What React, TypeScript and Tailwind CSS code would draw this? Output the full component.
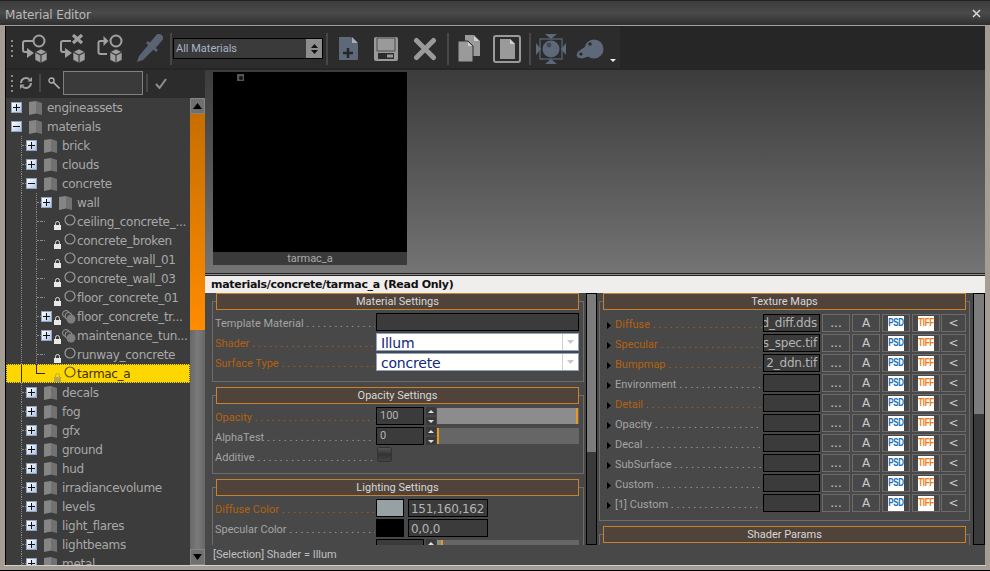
import { ReactNode } from "react";

const UI_FONT = "font-['DejaVu_Sans',sans-serif]";
const LABEL_FONT = "font-['Roboto',sans-serif]";

type TreeRow = {
  label: string;
  depth: number;
  kind: "folder" | "leaf" | "multi";
  open?: boolean;
  selected?: boolean;
};

const treeRows: TreeRow[] = [
  { label: "engineassets", depth: 0, kind: "folder" },
  { label: "materials", depth: 0, kind: "folder", open: true },
  { label: "brick", depth: 1, kind: "folder" },
  { label: "clouds", depth: 1, kind: "folder" },
  { label: "concrete", depth: 1, kind: "folder", open: true },
  { label: "wall", depth: 2, kind: "folder" },
  { label: "ceiling_concrete_...", depth: 2, kind: "leaf" },
  { label: "concrete_broken", depth: 2, kind: "leaf" },
  { label: "concrete_wall_01", depth: 2, kind: "leaf" },
  { label: "concrete_wall_03", depth: 2, kind: "leaf" },
  { label: "floor_concrete_01", depth: 2, kind: "leaf" },
  { label: "floor_concrete_tr...", depth: 2, kind: "multi" },
  { label: "maintenance_tun...", depth: 2, kind: "multi" },
  { label: "runway_concrete", depth: 2, kind: "leaf" },
  { label: "tarmac_a", depth: 2, kind: "leaf", selected: true },
  { label: "decals", depth: 1, kind: "folder" },
  { label: "fog", depth: 1, kind: "folder" },
  { label: "gfx", depth: 1, kind: "folder" },
  { label: "ground", depth: 1, kind: "folder" },
  { label: "hud", depth: 1, kind: "folder" },
  { label: "irradiancevolume", depth: 1, kind: "folder" },
  { label: "levels", depth: 1, kind: "folder" },
  { label: "light_flares", depth: 1, kind: "folder" },
  { label: "lightbeams", depth: 1, kind: "folder" },
  { label: "metal", depth: 1, kind: "folder" },
];

const textureRows = [
  { label: "Diffuse", value: "d_diff.dds", active: true },
  { label: "Specular", value: "s_spec.tif", active: true },
  { label: "Bumpmap", value: "2_ddn.tif", active: true },
  { label: "Environment", value: "" },
  { label: "Detail", value: "", active: true },
  { label: "Opacity", value: "" },
  { label: "Decal", value: "" },
  { label: "SubSurface", value: "" },
  { label: "Custom", value: "" },
  { label: "[1] Custom", value: "" },
];

const DOTS = " . . . . . . . . . . . . . . . . . . . . . . . . . .";

function Sep({ className = "" }: { className?: string }) {
  return <div className={`w-[2px] h-[32px] bg-[#474747] shrink-0 ${className}`} />;
}

function Grip() {
  return (
    <div className="flex flex-col gap-[3px] shrink-0">
      {[0, 1, 2, 3].map((i) => (
        <span key={i} className="block w-[2px] h-[2px] bg-[#8a8a8a]" />
      ))}
    </div>
  );
}

function Cube({ x, y }: { x: number; y: number }) {
  return (
    <g transform={`translate(${x} ${y})`}>
      <path d="M6 0 12 3 12 11 6 14 0 11 0 3Z" fill="#a0a0a0" stroke="#2c2c2c" strokeWidth="0.6" />
      <path d="M0 3 6 6 12 3M6 6V14" fill="none" stroke="#3a3a3a" strokeWidth="1.2" />
    </g>
  );
}

function FlowIcon({ variant }: { variant: "add" | "remove" | "assign" }) {
  return (
    <svg width="27" height="30" viewBox="0 0 27 30" className="shrink-0">
      {variant === "remove" ? (
        <path d="M13 1 22 9M22 1 13 9" stroke="#a0a0a0" strokeWidth="3.2" />
      ) : (
        <circle cx={variant === "assign" ? 19 : 17} cy="7" r="5.5" fill="none" stroke="#a0a0a0" strokeWidth="2" />
      )}
      {variant === "assign" ? (
        <>
          <path d="M8 7H3.500Q1.500 7 1.500 9V18Q1.500 20 3.500 20H10" fill="none" stroke="#a0a0a0" strokeWidth="2" />
          <path d="M6.500 2 11.500 7 6.500 12Z" fill="#a0a0a0" />
        </>
      ) : (
        <path d="M11 7H3Q1 7 1 9V16Q1 18 3 18H6" fill="none" stroke="#a0a0a0" strokeWidth="2" />
      )}
      {variant !== "assign" && <path d="M5 14 12 19 5 24Z" fill="#a0a0a0" />}
      <Cube x={13} y={15} />
    </svg>
  );
}

function Dropper() {
  return (
    <svg width="27" height="29" viewBox="0 0 27 29" className="shrink-0">
      <path d="M1 28 3 22 14 9 19 14 7 26Z" fill="#5a6373" />
      <path d="M11 8 21 17" stroke="#5a6373" strokeWidth="3" />
      <path d="M17 11 23 4" stroke="#5a6373" strokeWidth="8" strokeLinecap="round" />
    </svg>
  );
}

function SmallX({ size = 24 }: { size?: number }) {
  return (
    <svg width={size} height={size} viewBox="0 0 24 24" className="shrink-0">
      <path d="M3.500 3.500 20.500 20.500M20.500 3.500 3.500 20.500" stroke="#9a9a9a" strokeWidth="5" strokeLinecap="round" />
    </svg>
  );
}

function NewDoc() {
  return (
    <svg width="19" height="25" viewBox="0 0 19 25" className="shrink-0">
      <path d="M0 1H12L19 8V23Q19 24 18 24H1Q0 24 0 23Z" fill="#5d6879" />
      <path d="M13 1 19 7H13Z" fill="#a8adb5" />
      <path d="M9 12V22M4 17H14" stroke="#262626" strokeWidth="2.400" />
    </svg>
  );
}

function SaveIcon() {
  return (
    <svg width="24" height="24" viewBox="0 0 24 24" className="shrink-0">
      <path d="M2 0H22Q24 0 24 2V22Q24 24 22 24H2Q0 24 0 22V2Q0 0 2 0Z" fill="#9a9a9a" />
      <rect x="3" y="1" width="18" height="13" fill="#9a9a9a" stroke="#3a3a3a" strokeWidth="0.8" />
      <rect x="4" y="16" width="16" height="6" fill="#2c2c2c" />
      <rect x="13" y="17.500" width="6" height="3" fill="#9a9a9a" />
    </svg>
  );
}

function CopyDocs() {
  return (
    <svg width="22" height="28" viewBox="0 0 22 28" className="shrink-0">
      <path d="M7 0H16L22 6V21H7Z" fill="#9a9a9a" />
      <path d="M16 1 21 6H16Z" fill="#d0d0d0" />
      <path d="M0 6H10L15 11V27H0Z" fill="#9a9a9a" stroke="#2c2c2c" strokeWidth="1" />
      <path d="M10 7 14 11H10Z" fill="#d0d0d0" />
    </svg>
  );
}

function PageBox() {
  return (
    <div className="w-[28px] h-[28px] shrink-0 rounded-[3px] border-2 border-[#9a9a9a] flex items-center justify-center">
      <svg width="15" height="20" viewBox="0 0 15 20">
        <path d="M0 0H10L15 5V20H0Z" fill="#9a9a9a" />
        <path d="M10 0 15 5H10Z" fill="#d0d0d0" />
      </svg>
    </div>
  );
}

function SphereTargets() {
  return (
    <svg width="30" height="30" viewBox="0 0 30 30" className="shrink-0">
      <rect x="4" y="5" width="22" height="20" fill="none" stroke="#5d6879" strokeWidth="1.200" />
      <circle cx="15" cy="15" r="8.500" fill="#5d6879" />
      <path d="M9 0H21L15 5ZM9 30H21L15 25ZM0 9V21L5 15ZM30 9V21L25 15Z" fill="#5d6879" />
      <circle cx="13" cy="11" r="2.400" fill="#2c2c2c" opacity="0.5" />
    </svg>
  );
}

function SpherePill() {
  return (
    <svg width="29" height="20" viewBox="0 0 29 20" className="shrink-0">
      <path d="M2 13 16 3 20 16 7 20Q3 20 1 17Z" fill="#5d6879" stroke="#262626" strokeWidth="0.8" />
      <circle cx="19" cy="10" r="9.500" fill="#5d6879" />
      <circle cx="15" cy="5" r="1.800" fill="#2c2c2c" />
      <circle cx="6" cy="15" r="1.600" fill="#262626" />
    </svg>
  );
}

function RefreshIcon() {
  return (
    <svg width="14" height="14" viewBox="0 0 14 14" className="shrink-0">
      <path d="M2 7A5 5 0 0 1 10.500 3.500" fill="none" stroke="#a0a0a0" strokeWidth="2" />
      <path d="M12 7A5 5 0 0 1 3.500 10.500" fill="none" stroke="#a0a0a0" strokeWidth="2" />
      <path d="M8.500 5.500H13V1ZM5.500 8.500H1V13Z" fill="#a0a0a0" />
    </svg>
  );
}

function SearchIcon() {
  return (
    <svg width="12" height="12" viewBox="0 0 12 12" className="shrink-0">
      <circle cx="3.500" cy="3.500" r="2.500" fill="none" stroke="#b0b0b0" strokeWidth="1.400" />
      <path d="M5.500 5.500 11.500 11.500" stroke="#b0b0b0" strokeWidth="1.600" />
    </svg>
  );
}

function CheckIcon() {
  return (
    <svg width="12" height="11" viewBox="0 0 12 11" className="shrink-0">
      <path d="M1 6 4.500 10 11 1" fill="none" stroke="#8f8f8f" strokeWidth="2" />
    </svg>
  );
}

function ScrollArrow({ up }: { up?: boolean }) {
  return (
    <div className="h-[16px] shrink-0 bg-[#707070] border border-[#858585] flex items-center justify-center">
      <svg width="9" height="6" viewBox="0 0 9 6">
        <path d={up ? "M0 6H9L4.500 0Z" : "M0 0H9L4.500 6Z"} fill="#000" />
      </svg>
    </div>
  );
}

function Expander({ open }: { open?: boolean }) {
  return (
    <span className="flex w-[11px] h-[11px] shrink-0 items-center justify-center border border-[#8fa4c4] bg-gradient-to-br from-white to-[#b4c6e2]">
      <svg width="7" height="7" viewBox="0 0 7 7">
        <path d={open ? "M0 3.500H7" : "M0 3.500H7M3.500 0V7"} stroke="#111" strokeWidth="1" />
      </svg>
    </span>
  );
}

function FolderIcon() {
  return (
    <svg width="14" height="14" viewBox="0 0 14 14" className="shrink-0">
      <path d="M0 1 7 0V12.500L0 14Z" fill="#858585" />
      <path d="M7 0 13 2V14L7 12.500Z" fill="#717171" />
    </svg>
  );
}

function LockIcon({ dim }: { dim?: boolean }) {
  return (
    <svg width="7" height="9" viewBox="0 0 7 9" className="shrink-0 mt-[7px]">
      <path d="M1.500 4V2.500A2 2 0 0 1 5.500 2.500V4" fill="none" stroke={dim ? "#b8a84a" : "#d8d8d8"} strokeWidth="1" />
      <rect x="0" y="4" width="7" height="5" fill={dim ? "#b8a84a" : "#e8e8e8"} />
    </svg>
  );
}

function RingIcon({ dark }: { dark?: boolean }) {
  return (
    <svg width="12" height="12" viewBox="0 0 12 12" className="shrink-0">
      <circle cx="6" cy="6" r="5" fill="none" stroke={dark ? "#5c5230" : "#9a9a9a"} strokeWidth="1.200" />
    </svg>
  );
}

function MultiRing() {
  return (
    <svg width="14" height="14" viewBox="0 0 14 14" className="shrink-0">
      <circle cx="4" cy="4" r="3.500" fill="none" stroke="#9a9a9a" />
      <circle cx="6.500" cy="6" r="3.500" fill="#3c3c3c" stroke="#9a9a9a" />
      <circle cx="9" cy="9" r="4.500" fill="#7d7d7d" />
    </svg>
  );
}

function Guide({ connector, corner, solid }: { connector?: boolean; corner?: boolean; solid?: boolean }) {
  const line = solid ? "border-solid border-[#2b2b2b]" : "border-dotted border-[#8a8a8a]";
  return (
    <span className="flex h-full w-[15px] shrink-0 pl-[10px]">
      {corner ? (
        <span className={`h-[10px] w-[5px] border-b border-l ${line}`} />
      ) : (
        <span className={`flex h-full w-[5px] items-center border-l ${line}`}>
          {connector && <span className={`block h-0 w-full border-t ${line}`} />}
        </span>
      )}
    </span>
  );
}

function TreeItem({ row }: { row: TreeRow }) {
  const isLeafRow = row.kind !== "folder";
  const guides = [];
  for (let i = 0; i < row.depth; i++) {
    const last = i === row.depth - 1;
    guides.push(<Guide key={i} connector={last} corner={last && row.selected} solid={row.selected} />);
  }
  return (
    <div
      className={`flex h-[19px] shrink-0 items-center pl-[5px] text-[12px] tracking-[-0.3px] whitespace-nowrap ${
        row.selected ? "bg-[#ffd700] text-[#3a3000] outline outline-1 -outline-offset-1 outline-dotted outline-[#555]" : "text-[#a8a8a8]"
      }`}
    >
      {guides}
      {row.kind === "folder" && (
        <>
          <Expander open={row.open} />
          <span className="ml-[7px]">
            <FolderIcon />
          </span>
          <span className="ml-[4px]">{row.label}</span>
        </>
      )}
      {isLeafRow && (
        <>
          {row.kind === "multi" ? (
            <span className="flex w-[11px] justify-center">
              <Expander />
            </span>
          ) : (
            <span className={`h-0 w-[4px] border-t ${row.selected ? "border-[#2b2b2b]" : "border-dotted border-[#8a8a8a]"}`} />
          )}
          <span className={`${row.kind === "multi" ? "ml-[2px]" : "ml-[9px]"} flex`}>
            <LockIcon dim={row.selected} />
          </span>
          {row.kind === "multi" ? (
            <span className="ml-[1px] mr-[1px]">
              <MultiRing />
            </span>
          ) : (
            <span className="ml-[3px] mr-[1px] mb-[3px]">
              <RingIcon dark={row.selected} />
            </span>
          )}
          <span>{row.label}</span>
        </>
      )}
    </div>
  );
}

function Group({
  title,
  className = "",
  headerClass = "mr-[5px]",
  bodyClass,
  children,
}: {
  title: string;
  className?: string;
  headerClass?: string;
  bodyClass: string;
  children?: ReactNode;
}) {
  return (
    <div className={`flex shrink-0 flex-col ${className}`}>
      <div className={`z-10 ml-[4px] flex h-[17px] items-center justify-center border border-[#c8822f] bg-[#4f433a] pt-[2px] text-[11px] text-[#d8d8d8] ${LABEL_FONT} ${headerClass}`}>
        {title}
      </div>
      <div className={`-mt-[9px] border border-[#6c6c6c] ${bodyClass}`}>{children}</div>
    </div>
  );
}

function FieldLabel({ label, active, width = "w-[160px]" }: { label: string; active?: boolean; width?: string }) {
  return (
    <div className={`${width} -ml-[1px] mr-[1px] h-[18px] shrink-0 overflow-hidden whitespace-pre text-[11px] leading-[22px] ${LABEL_FONT} ${active ? "text-[#b5610f]" : "text-[#a4a4a4]"}`}>
      {label}
      {DOTS}
    </div>
  );
}

function DarkInput({ className = "", children }: { className?: string; children?: ReactNode }) {
  return (
    <div className={`flex h-[18px] shrink-0 items-center overflow-hidden whitespace-nowrap border border-black bg-[#3b3b3b] text-[#b4b4b4] ${className}`}>
      {children}
    </div>
  );
}

function ComboField({ value }: { value: string }) {
  return (
    <div className="flex h-[18px] w-[203px] shrink-0 items-center border border-[#8ba3bf] bg-white text-[14px] tracking-[-0.2px] text-[#12287a]">
      <span className="flex-1 pl-[4px] pt-[1px] leading-[16px]">{value}</span>
      <span className="flex h-full w-[16px] items-center justify-center border-l border-[#d0d0d0]">
        <svg width="7" height="4" viewBox="0 0 7 4">
          <path d="M0 0H7L3.500 4Z" fill="#c8c8c8" />
        </svg>
      </span>
    </div>
  );
}

function Spinner() {
  return (
    <div className="mx-[1px] flex w-[10px] shrink-0 flex-col justify-between self-stretch">
      <span className="flex h-[8px] items-center justify-center bg-[#3a3a3a]">
        <svg width="6" height="3" viewBox="0 0 6 3">
          <path d="M0 3H6L3 0Z" fill="#ddd" />
        </svg>
      </span>
      <span className="flex h-[8px] items-center justify-center bg-[#3a3a3a]">
        <svg width="6" height="3" viewBox="0 0 6 3">
          <path d="M0 0H6L3 3Z" fill="#ddd" />
        </svg>
      </span>
    </div>
  );
}

function SliderRow({ label, active, value, pct }: { label: string; active?: boolean; value: string; pct: number }) {
  return (
    <div className="flex h-[18px] shrink-0">
      <FieldLabel label={label} active={active} />
      <DarkInput className={`w-[48px] pl-[3px] text-[11px] ${LABEL_FONT}`}>{value}</DarkInput>
      <span className="ml-[1px]" />
      <Spinner />
      <div className="flex h-[16px] w-[143px] self-center bg-[#666]">
        <div className="h-full bg-[#8c8c8c]" style={{ width: `${pct}%` }} />
        <div className="h-full w-[2px] shrink-0 bg-[#e39a1f]" />
      </div>
    </div>
  );
}

function ColorRow({ label, active, color, value }: { label: string; active?: boolean; color: string; value: string }) {
  return (
    <div className="flex h-[18px] shrink-0">
      <FieldLabel label={label} active={active} />
      <div className="h-[18px] w-[28px] shrink-0 border border-black" style={{ backgroundColor: color }} />
      <DarkInput className="ml-[4px] w-[80px] pl-[2px] pt-[1px] text-[12px] tracking-[-0.3px]">{value}</DarkInput>
    </div>
  );
}

function MapButton({ children, className = "w-[28px]" }: { children: ReactNode; className?: string }) {
  return (
    <div className={`flex h-[18px] shrink-0 items-center justify-center border border-[#6c6c6c] text-[12px] text-[#c8c8c8] ${className}`}>
      {children}
    </div>
  );
}

function FormatLogo({ text, color }: { text: string; color: string }) {
  return (
    <div className="flex h-[15px] w-[16px] items-center justify-center bg-white font-['Liberation_Sans',sans-serif] text-[8px] font-bold whitespace-nowrap" style={{ color }}>
      <span className={text === "PSD" ? "scale-y-[1.35] tracking-[-0.25px]" : "scale-y-[1.35] tracking-[-0.4px]"}>{text}</span>
    </div>
  );
}

function TextureRow({ label, value, active }: { label: string; value: string; active?: boolean }) {
  return (
    <div className="flex h-[18px] shrink-0 items-center">
      <svg width="4" height="7" viewBox="0 0 4 7" className="ml-[7px] mr-[5px] mt-[4px] shrink-0">
        <path d="M0 0 4 3.500 0 7Z" fill="#000" />
      </svg>
      <FieldLabel label={label} active={active} width="w-[147px]" />
      <DarkInput className="w-[57px] justify-end pr-[2px] text-[12px] tracking-[-0.2px]">{value}</DarkInput>
      <MapButton className="ml-[2px] w-[28px]">...</MapButton>
      <MapButton className="ml-[2px] w-[28px]">A</MapButton>
      <MapButton className="ml-[2px] w-[28px]">
        <FormatLogo text="PSD" color="#1b6fb8" />
      </MapButton>
      <MapButton className="ml-[2px] w-[28px]">
        <FormatLogo text="TIFF" color="#f47a16" />
      </MapButton>
      <MapButton className="ml-[1px] w-[25px]">&lt;</MapButton>
    </div>
  );
}

function PanelScroll({ thumb, width }: { thumb: string; width: string }) {
  return (
    <div className={`flex h-full shrink-0 flex-col border border-black bg-[#3a3a3a] ${width}`}>
      <div className={`${thumb} shrink-0 bg-[#7c7c7c]`} />
    </div>
  );
}

export default function App() {
  return (
    <div className={`flex h-[571px] w-[990px] flex-col overflow-hidden bg-[#a59d93] ${UI_FONT}`}>
      {/* title bar */}
      <div className="flex h-[25px] shrink-0 items-center justify-between border-t border-[#222] bg-gradient-to-b from-[#3c3c3c] via-[#4a4a4a] to-[#2f2f2f] pl-[5px] pr-[9px] text-[12px] tracking-[-0.15px] text-[#b9b9b9]">
        <span className="mt-[3px]">Material Editor</span>
        <svg width="9" height="9" viewBox="0 0 9 9">
          <path d="M1 1 8 8M8 1 1 8" stroke="#d8d8d8" strokeWidth="1.500" />
        </svg>
      </div>
      <div className="h-[1px] shrink-0 bg-[#a0a0a0]" />

      {/* window body */}
      <div className="mx-[5px] flex min-h-0 flex-1 flex-col border-l border-black bg-[#262626]">
        {/* main toolbar */}
        <div className="mt-[1px] flex h-[41px] shrink-0 items-center">
          <div className="flex h-full w-[614px] shrink-0 items-center bg-[#2c2c2c] pl-[5px] pt-[2px]">
            <Grip />
            <span className="ml-[9px]"><FlowIcon variant="add" /></span>
            <span className="ml-[11px]"><FlowIcon variant="remove" /></span>
            <span className="ml-[10px]"><FlowIcon variant="assign" /></span>
            <span className="ml-[12px]"><Dropper /></span>
            <Sep className="ml-[7px]" />
            <div className={`ml-[1px] flex h-[21px] w-[150px] shrink-0 items-center border border-black bg-[#3a3a3a] text-[11px] text-[#a9b4c6] ${LABEL_FONT}`}>
              <span className="flex-1 pl-[2px] pt-[1px]">All Materials</span>
              <span className="flex h-full w-[16px] flex-col items-center justify-center gap-[2px] bg-[#8d8d8d]">
                <svg width="7" height="4" viewBox="0 0 7 4"><path d="M0 4H7L3.500 0Z" fill="#111" /></svg>
                <svg width="7" height="4" viewBox="0 0 7 4"><path d="M0 0H7L3.500 4Z" fill="#111" /></svg>
              </span>
            </div>
            <Sep className="ml-[3px]" />
            <span className="ml-[11px]"><NewDoc /></span>
            <span className="ml-[16px]"><SaveIcon /></span>
            <span className="ml-[15px]"><SmallX /></span>
            <Sep className="ml-[10px]" />
            <span className="ml-[9px]"><CopyDocs /></span>
            <span className="ml-[13px]"><PageBox /></span>
            <Sep className="ml-[8px]" />
            <span className="ml-[5px]"><SphereTargets /></span>
            <span className="ml-[9px]"><SpherePill /></span>
            <svg width="6" height="3" viewBox="0 0 6 3" className="ml-[6px] mt-[24px] shrink-0">
              <path d="M0 0H6L3 3Z" fill="#eee" />
            </svg>
          </div>
        </div>

        <div className="mt-[2px] flex min-h-0 flex-1">
          {/* tree column */}
          <div className="flex w-[199px] shrink-0 flex-col">
            <div className="flex h-[28px] shrink-0 items-center bg-[#2c2c2c] pb-[2px] pl-[5px]">
              <Grip />
              <span className="ml-[6px]"><RefreshIcon /></span>
              <div className="ml-[6px] h-[18px] w-[2px] bg-[#474747]" />
              <span className="ml-[7px]"><SearchIcon /></span>
              <div className="ml-[3px] h-[24px] w-[80px] border border-[#808080] bg-[#3a3a3a]" />
              <div className="ml-[3px] h-[18px] w-[2px] bg-[#474747]" />
              <span className="ml-[7px]"><CheckIcon /></span>
            </div>
            <div className="flex min-h-0 flex-1 bg-[#3c3c3c]">
              <div className="flex min-w-0 flex-1 flex-col overflow-hidden">
                {treeRows.map((row) => (
                  <TreeItem key={row.label} row={row} />
                ))}
              </div>
              <div className="flex w-[15px] shrink-0 flex-col">
                <ScrollArrow up />
                <div className="h-[216px] shrink-0 bg-gradient-to-b from-[#c76e00] to-[#ff8c00]" />
                <div className="flex-1 bg-gradient-to-r from-[#686868] via-[#7a7a7a] to-[#686868]" />
                <ScrollArrow />
              </div>
            </div>
          </div>

          {/* editor column */}
          <div className="flex min-w-0 flex-1 flex-col">
            <div className="flex h-[203px] shrink-0 items-start bg-gradient-to-b from-[#3c3c3c] to-[#747474] pl-[8px] pt-[2px]">
              <div className="flex h-[193px] w-[194px] flex-col bg-black">
                <div className="ml-[24px] mt-[2px] h-[7px] w-[7px] flex-1">
                  <div className="flex h-[7px] w-[7px] items-center justify-center bg-[#555]">
                    <span className="block h-[4px] w-[4px] rounded-full bg-[#1c1416]" />
                  </div>
                </div>
                <div className={`flex h-[13px] shrink-0 items-center justify-center bg-[#3a3a3a] pt-[1px] text-[11px] leading-[12px] text-[#aaa] ${LABEL_FONT}`}>tarmac_a</div>
              </div>
            </div>
            <div className="h-[3px] shrink-0 border-y border-[#222] bg-[#8a8a8a]" />
            <div className="flex h-[17px] shrink-0 items-center bg-[#f0eded] pl-[6px] pt-[1px] text-[11px] font-bold tracking-[-0.3px] text-[#111]">
              materials/concrete/tarmac_a (Read Only)
            </div>

            <div className="flex min-h-0 flex-1 bg-[#484848]">
              <div className="flex h-[252px] w-[380px] shrink-0 flex-col overflow-hidden pl-[7px] pr-[1px]">
                <Group title="Material Settings" bodyClass="flex flex-col gap-[2px] pl-[3px] pr-[4px] pt-[11px] pb-[10px]">
                  <div className="flex h-[18px]">
                    <FieldLabel label="Template Material" />
                    <DarkInput className="w-[203px]" />
                  </div>
                  <div className="flex h-[18px]">
                    <FieldLabel label="Shader" active />
                    <ComboField value="Illum" />
                  </div>
                  <div className="flex h-[18px]">
                    <FieldLabel label="Surface Type" active />
                    <ComboField value="concrete" />
                  </div>
                </Group>
                <Group title="Opacity Settings" className="mt-[5px]" bodyClass="flex flex-col gap-[2px] pl-[3px] pr-[4px] pt-[11px] pb-[8px]">
                  <SliderRow label="Opacity" active value="100" pct={98} />
                  <SliderRow label="AlphaTest" value="0" pct={0} />
                  <div className="flex h-[18px]">
                    <FieldLabel label="Additive" />
                    <div className="ml-[1px] h-[15px] w-[15px] rounded-[2px] border border-[#333] bg-gradient-to-b from-[#555] via-[#333] to-[#444]" />
                  </div>
                </Group>
                <Group title="Lighting Settings" className="mt-[5px]" bodyClass="flex flex-col gap-[2px] pl-[3px] pr-[4px] pt-[11px]">
                  <ColorRow label="Diffuse Color" active color="#97a0a2" value="151,160,162" />
                  <ColorRow label="Specular Color" color="#000000" value="0,0,0" />
                  <SliderRow label="" value="" pct={3} />
                </Group>
              </div>
              <div className="mx-[1px]">
                <PanelScroll thumb="h-[158px]" width="w-[11px]" />
              </div>
              <div className="flex h-[252px] w-[372px] shrink-0 flex-col overflow-hidden pl-[1px]">
                <Group title="Texture Maps" headerClass="mr-[4px]" bodyClass="flex flex-col gap-[2px] pr-[3px] pt-[12px] pb-[8px]">
                  {textureRows.map((row) => (
                    <TextureRow key={row.label} {...row} />
                  ))}
                </Group>
                <Group title="Shader Params" headerClass="mr-[4px]" className="mt-[5px]" bodyClass="h-[20px]" />
              </div>
              <div className="ml-[3px]">
                <PanelScroll thumb="h-[120px]" width="w-[12px]" />
              </div>
            </div>

            <div className={`flex h-[20px] shrink-0 items-center bg-[#484848] pl-[8px] text-[11px] text-[#c0c0c0] ${LABEL_FONT}`}>[Selection] Shader = Illum</div>
          </div>
        </div>
      </div>
      <div className="mx-[4px] h-[1px] shrink-0 bg-[#d0d0d0]" />
      <div className="h-[4px] shrink-0" />
      <div className="h-[1px] shrink-0 bg-black" />
    </div>
  );
}
